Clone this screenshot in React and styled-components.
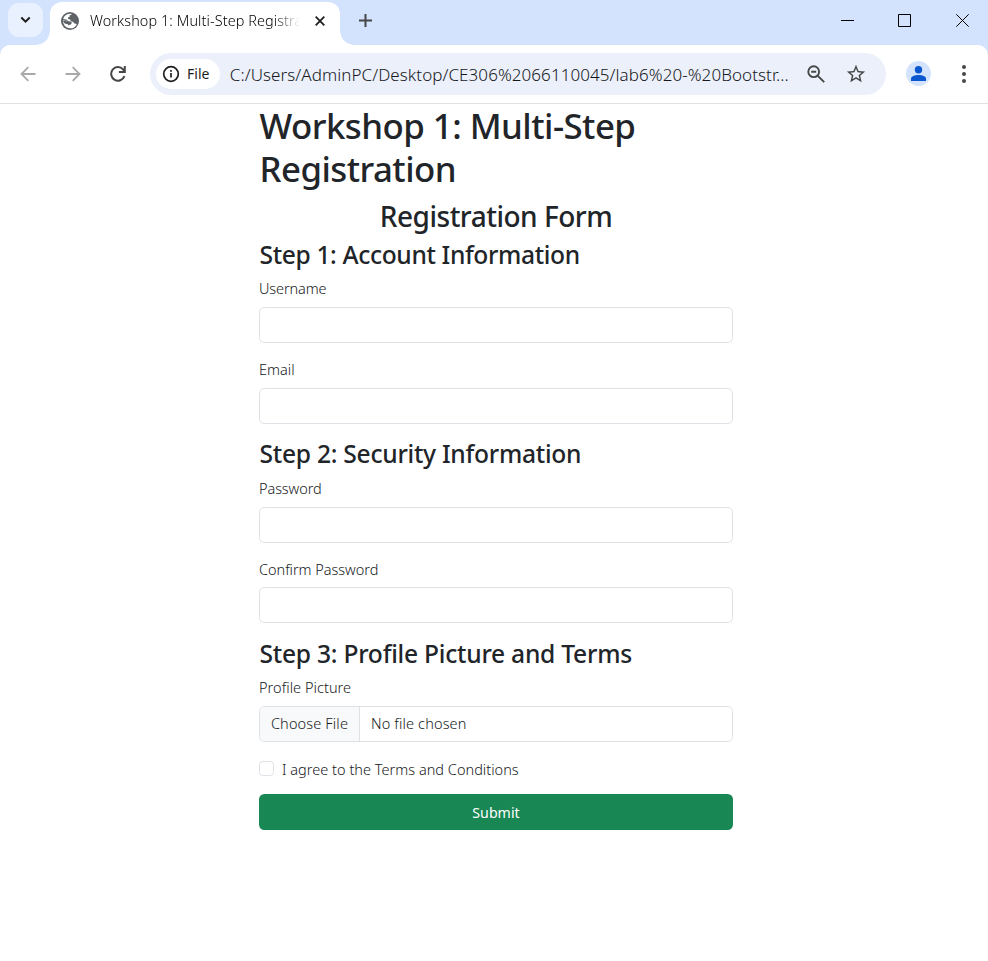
import React from "react";
import styled, { createGlobalStyle } from "styled-components";

const GlobalStyle = createGlobalStyle`
  *, *::before, *::after { box-sizing: border-box; }
  body {
    margin: 0;
    background: #fff;
    color: #16191c;
    font-family: "Noto Sans", "Open Sans", sans-serif;
    font-size: 14.5px;
    font-weight: 300;
    line-height: 21.6px;
    overflow: hidden;
  }
  button, input { font: inherit; color: inherit; letter-spacing: inherit; }
`;

const Window = styled.div`
  height: 961px;
  display: flex;
  flex-direction: column;
`;

const TabStrip = styled.header`
  height: 45px;
  flex: none;
  display: flex;
  align-items: flex-start;
  background: #d3e3fd;
  color: #1f1f1f;
`;

const TabSearch = styled.button`
  width: 35px;
  height: 34px;
  margin: 3px 7px 0 8px;
  padding: 0;
  border: 0;
  border-radius: 11px;
  background: #e9f1fe;
  display: grid;
  place-items: center;
`;

const Tab = styled.div`
  position: relative;
  width: 290px;
  height: 43px;
  margin-top: 2px;
  padding: 0 12px 6px 11px;
  border-radius: 12px 12px 0 0;
  background: #fff;
  display: flex;
  align-items: center;

  &::before,
  &::after {
    content: "";
    position: absolute;
    bottom: 0;
    width: 14px;
    height: 14px;
  }
  &::before {
    left: -14px;
    background: radial-gradient(circle at 0 0, transparent 13.5px, #fff 14px);
  }
  &::after {
    right: -14px;
    background: radial-gradient(circle at 100% 0, transparent 13.5px, #fff 14px);
  }
`;

const TabTitle = styled.span`
  width: 210px;
  margin: 0 12px 0 11px;
  overflow: hidden;
  white-space: nowrap;
  font-size: 14.4px;
  letter-spacing: 0.1px;
  color: #000;
  mask-image: linear-gradient(to right, #000 184px, transparent 210px);
`;

const IconButton = styled.button`
  width: ${(p) => p.$size}px;
  height: ${(p) => p.$size}px;
  padding: 0;
  border: 0;
  background: none;
  flex: none;
  display: grid;
  place-items: center;
`;

const NewTab = styled(IconButton)`
  margin: 8px 0 0 13px;
`;

const WindowControls = styled.div`
  margin-left: auto;
  display: flex;
`;

const ControlButton = styled.button`
  width: 57px;
  height: 41px;
  padding: 0;
  border: 0;
  background: none;
  display: grid;
  place-items: center;

  &:last-child { width: 55px; padding-left: 3px; }
`;

const ToolbarBack = styled.div`
  flex: none;
  background: #d3e3fd;
`;

const Toolbar = styled.nav`
  height: 59px;
  border-bottom: 1px solid #dfe1e3;
  border-radius: 10px 10px 0 0;
  background: #fff;
  display: flex;
  align-items: center;
  color: #474747;
`;

const NavButtons = styled.div`
  display: flex;
  gap: 13px;
  padding: 0 16.5px 0 11.5px;
`;

const AddressBar = styled.div`
  width: 736px;
  height: 42px;
  padding: 0 14px 0 6px;
  border-radius: 21px;
  background: #ebf0fa;
  display: flex;
  align-items: center;
`;

const SchemeChip = styled.div`
  width: 64px;
  height: 30px;
  padding-left: 5px;
  border-radius: 15px;
  background: #fff;
  color: #1f1f1f;
  display: flex;
  align-items: center;
  gap: 6px;
  font-size: 14px;
  font-weight: 400;
`;

const Url = styled.span`
  width: 572px;
  margin: 2px 0 0 10px;
  white-space: nowrap;
  font-size: 17px;
  letter-spacing: 0.07px;
  color: #16181b;
`;

const ActionGroup = styled.div`
  display: flex;
  gap: 8px;
  margin-left: auto;
`;

const Avatar = styled.div`
  width: 25px;
  height: 25px;
  margin: -2px 0 0 20px;
  border-radius: 50%;
  background: #d3e3fd;
  display: grid;
  place-items: center;
`;

const MenuButton = styled(IconButton)`
  margin-left: 17px;
`;

const Page = styled.main`
  width: 474px;
  margin: 0 auto 0 259px;
`;

const Title = styled.h1`
  margin: 0 0 8.2px;
  padding-left: 0.5px;
  color: #212529;
  font-size: 34.8px;
  font-weight: 500;
  line-height: 43.2px;
  letter-spacing: -0.53px;
`;

const FormTitle = styled.h2`
  margin: 0 0 6.6px;
  color: #212529;
  text-align: center;
  font-size: 28px;
  font-weight: 500;
  line-height: 34.6px;
  letter-spacing: -0.5px;
`;

const StepTitle = styled.h3`
  margin: 0 0 7.9px;
  padding-left: 0.5px;
  color: #212529;
  font-size: 24.6px;
  font-weight: 500;
  line-height: 30.2px;
  letter-spacing: ${(p) => p.$tracking}px;
`;

const Field = styled.div`
  margin-bottom: 15.4px;
`;

const Label = styled.label`
  display: block;
  margin-bottom: 7.3px;
  padding-top: 0.6px;
  letter-spacing: ${(p) => p.$tracking ?? 0}px;
`;

const TextInput = styled.input`
  display: block;
  width: 100%;
  height: 35.8px;
  padding: 5.4px 10.8px;
  border: 1px solid #dee2e6;
  border-radius: 5.4px;
  background: #fff;
`;

const FilePicker = styled.div`
  height: 35.8px;
  border: 1px solid #dee2e6;
  border-radius: 5.4px;
  overflow: hidden;
  display: flex;
  align-items: stretch;
  letter-spacing: 0.15px;
`;

const ChooseButton = styled.button`
  width: 100px;
  padding: 0;
  border: 0;
  border-right: 1px solid #dee2e6;
  background: #f8f9fa;
`;

const FileName = styled.span`
  padding-left: 11px;
  line-height: 33.4px;
`;

const Agreement = styled.label`
  display: flex;
  align-items: center;
  margin: 0 0 13.4px;
  padding-top: 1.4px;
  letter-spacing: 0.02px;
`;

const Checkbox = styled.input`
  appearance: none;
  width: 15px;
  height: 15px;
  margin: -3px 8px 0 0;
  border: 1px solid #dee2e6;
  border-radius: 3.6px;
  background: #fff;
`;

const SubmitButton = styled.button`
  width: 100%;
  height: 36px;
  padding: 2px 0 0;
  border: 0;
  border-radius: 5.4px;
  background: #198754;
  color: #fff;
  font-size: 14.2px;
  font-weight: 400;
`;

const GlobeIcon = () => (
  <svg width="18" height="18" viewBox="0 0 18 18">
    <circle cx="9" cy="9" r="9" fill="#5f6368" />
    <path
      d="M10.6 1.9a7.3 7.3 0 0 0-8.5 5.2l3.3.4 2.2 1.9h2.3l1 1.6-1.2 1.5-1.6.4-.6 3.2a7.3 7.3 0 0 0 8.3-4.2l-2.3-.3-1.7-1.9-2-.5-.6-1.6-2-.5-.3-1.4 1.8-1.3.2-1.3 1.7-.4Z"
      fill="#fff"
    />
    <path d="M1.9 8.6h3.2l1.6 1.8v2.2l1.7 1.3v2.2A7.2 7.2 0 0 1 1.9 8.6Z" fill="#fff" />
    <path d="M2 9.5c1.2 2 3.3 2.8 5.4 2.5l1.7-1.5-1.5-1.3-2 .2-1.4-1.2Z" fill="#5f6368" />
  </svg>
);

const steps = [
  {
    title: "Step 1: Account Information",
    tracking: -0.36,
    fields: [
      { label: "Username", type: "text", tracking: -0.12 },
      { label: "Email", type: "email" },
    ],
  },
  {
    title: "Step 2: Security Information",
    tracking: -0.26,
    fields: [
      { label: "Password", type: "password", tracking: -0.08 },
      { label: "Confirm Password", type: "password", tracking: -0.03 },
    ],
  },
];

function TitleBar() {
  return (
    <TabStrip>
      <TabSearch aria-label="Search tabs">
        <svg width="12" height="8" viewBox="0 0 12 8" fill="none" stroke="#1f1f1f" strokeWidth="2">
          <path d="m1.3 1.5 4.2 4.2 4.2-4.2" />
        </svg>
      </TabSearch>
      <Tab>
        <GlobeIcon />
        <TabTitle>Workshop 1: Multi-Step Registration</TabTitle>
        <IconButton $size={16} aria-label="Close tab">
          <svg width="10" height="10" viewBox="0 0 10 10" stroke="#1f1f1f" strokeWidth="1.8">
            <path d="m.7.7 8.6 8.6M9.3.7.7 9.3" />
          </svg>
        </IconButton>
      </Tab>
      <NewTab $size={24} aria-label="New tab">
        <svg width="13" height="13" viewBox="0 0 13 13" stroke="#474747" strokeWidth="2">
          <path d="M6.5 0v13M0 6.5h13" />
        </svg>
      </NewTab>
      <WindowControls>
        <ControlButton aria-label="Minimize">
          <svg width="13" height="13" viewBox="0 0 13 13" stroke="#000">
            <path d="M0 6.5h13" />
          </svg>
        </ControlButton>
        <ControlButton aria-label="Maximize">
          <svg width="13" height="13" viewBox="0 0 13 13" fill="none" stroke="#000">
            <path d="M.5.5h12v12H.5z" />
          </svg>
        </ControlButton>
        <ControlButton aria-label="Close">
          <svg width="13" height="13" viewBox="0 0 13 13" stroke="#000">
            <path d="m.3.3 12.4 12.4M12.7.3.3 12.7" />
          </svg>
        </ControlButton>
      </WindowControls>
    </TabStrip>
  );
}

function NavigationBar() {
  return (
    <ToolbarBack>
      <Toolbar>
        <NavButtons>
          <IconButton $size={32} aria-label="Back">
            <svg width="16" height="16" viewBox="0 0 16 16" fill="none" stroke="#a9a9a9" strokeWidth="1.8">
              <path d="M15.5 8H2M8.3 1.2 1.5 8l6.8 6.8" />
            </svg>
          </IconButton>
          <IconButton $size={32} aria-label="Forward">
            <svg width="16" height="16" viewBox="0 0 16 16" fill="none" stroke="#a9a9a9" strokeWidth="1.8">
              <path d="M.5 8H14M7.7 1.2 14.5 8l-6.8 6.8" />
            </svg>
          </IconButton>
          <IconButton $size={32} aria-label="Reload">
            <svg width="16" height="16" viewBox="0 0 16 16" fill="none" stroke="#474747" strokeWidth="2">
              <path d="M14.4 10.2A6.8 6.8 0 1 1 13 3.3l1.5 1.9" />
              <path d="M14.8 0v6.1H8.9" />
            </svg>
          </IconButton>
        </NavButtons>
        <AddressBar>
          <SchemeChip>
            <svg width="20" height="20" viewBox="0 0 20 20" fill="none" stroke="#1f1f1f" strokeWidth="1.7">
              <circle cx="10" cy="10" r="7.3" />
              <path d="M10 9v4.6M10 6v1.8" />
            </svg>
            File
          </SchemeChip>
          <Url>C:/Users/AdminPC/Desktop/CE306%2066110045/lab6%20-%20Bootstr...</Url>
          <ActionGroup>
            <IconButton $size={32} aria-label="Zoom">
              <svg width="18" height="18" viewBox="0 0 18 18" fill="none" stroke="#474747" strokeWidth="1.9">
                <circle cx="6.7" cy="6.7" r="5.4" />
                <path d="m10.6 10.6 6.6 6.6M4.2 6.7h5" />
              </svg>
            </IconButton>
            <IconButton $size={32} aria-label="Bookmark">
              <svg width="22" height="22" viewBox="0 0 24 24" fill="#474747">
                <path d="m22 9.24-7.19-.62L12 2 9.19 8.63 2 9.24l5.46 4.73L5.82 21 12 17.27 18.18 21l-1.63-7.03L22 9.24ZM12 15.4l-3.76 2.27 1-4.28-3.32-2.88 4.38-.38L12 6.1l1.71 4.04 4.38.38-3.32 2.88 1 4.28L12 15.4Z" />
              </svg>
            </IconButton>
          </ActionGroup>
        </AddressBar>
        <Avatar>
          <svg width="15" height="15" viewBox="0 0 15 15" fill="#0b57d0">
            <circle cx="7.5" cy="3.7" r="3.7" />
            <path d="M0 15v-2.3C0 10 3.8 8.9 7.5 8.9S15 10 15 12.7V15Z" />
          </svg>
        </Avatar>
        <MenuButton $size={32} aria-label="Menu">
          <svg width="4" height="18" viewBox="0 0 4 18" fill="#474747">
            <circle cx="2" cy="2" r="2" />
            <circle cx="2" cy="9" r="2" />
            <circle cx="2" cy="16" r="2" />
          </svg>
        </MenuButton>
      </Toolbar>
    </ToolbarBack>
  );
}

export default function App() {
  return (
    <Window>
      <GlobalStyle />
      <TitleBar />
      <NavigationBar />
      <Page>
        <Title>Workshop 1: Multi-Step Registration</Title>
        <FormTitle>Registration Form</FormTitle>
        {steps.map((step) => (
          <section key={step.title}>
            <StepTitle $tracking={step.tracking}>{step.title}</StepTitle>
            {step.fields.map((field) => (
              <Field key={field.label}>
                <Label $tracking={field.tracking}>{field.label}</Label>
                <TextInput type={field.type} aria-label={field.label} />
              </Field>
            ))}
          </section>
        ))}
        <section>
          <StepTitle $tracking={-0.24}>Step 3: Profile Picture and Terms</StepTitle>
          <Field>
            <Label $tracking={0.05}>Profile Picture</Label>
            <FilePicker>
              <ChooseButton>Choose File</ChooseButton>
              <FileName>No file chosen</FileName>
            </FilePicker>
          </Field>
          <Agreement>
            <Checkbox type="checkbox" />
            I agree to the Terms and Conditions
          </Agreement>
          <SubmitButton>Submit</SubmitButton>
        </section>
      </Page>
    </Window>
  );
}
